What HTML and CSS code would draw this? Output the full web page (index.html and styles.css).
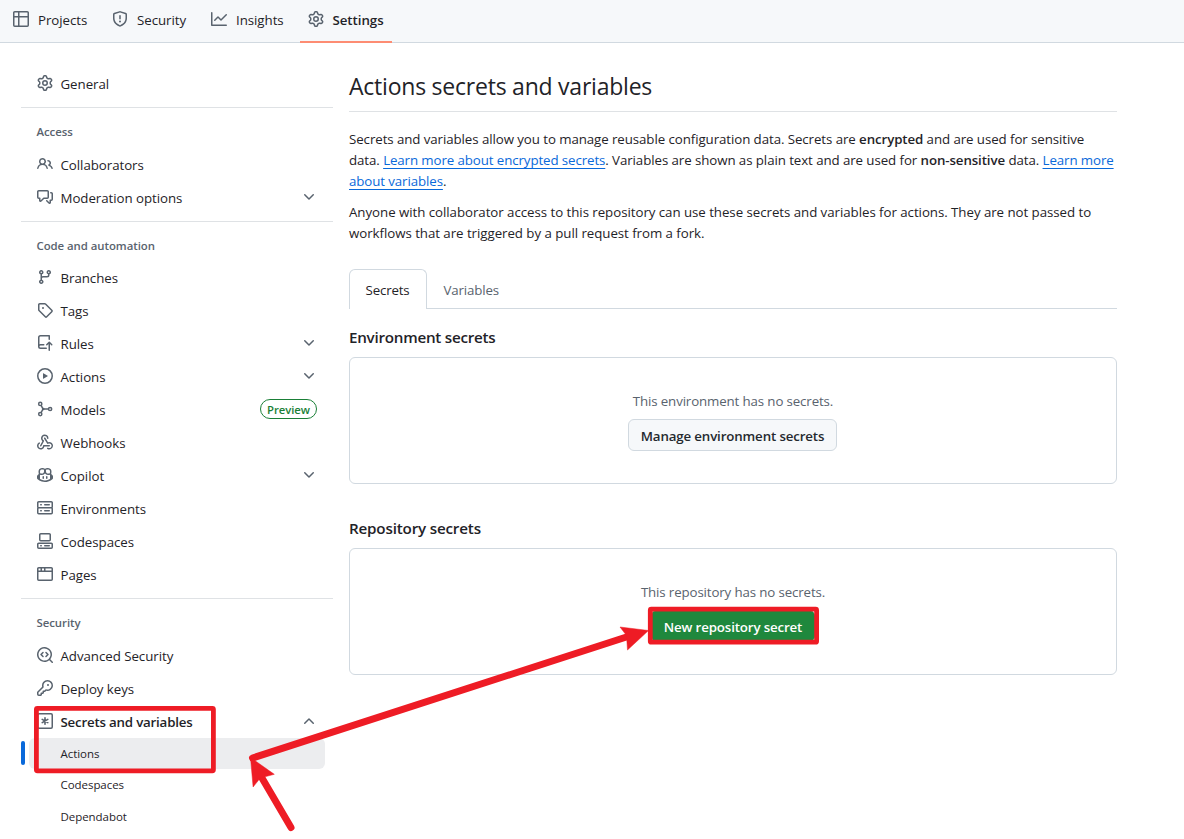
FILE: index.html
```html
<!DOCTYPE html>
<html lang="en">
<head>
<meta charset="utf-8">
<title>Actions secrets and variables</title>
<link rel="stylesheet" href="styles.css">
</head>
<body>
<svg class="defs" aria-hidden="true">
  <symbol id="table" viewBox="0 0 16 16"><path d="M0 1.75C0 .784.784 0 1.75 0h12.5C15.216 0 16 .784 16 1.75v12.5A1.75 1.75 0 0 1 14.25 16H1.75A1.75 1.75 0 0 1 0 14.25ZM6.5 6.5v8h7.75a.25.25 0 0 0 .25-.25V6.5Zm8-1.500V1.750a.25.25 0 0 0-.25-.25H6.500V5Zm-13 1.500v7.750c0 .138.112.25.25.25H5v-8ZM5 5V1.500H1.750a.25.25 0 0 0-.25.25V5Z"/></symbol>
  <symbol id="shield" viewBox="0 0 16 16"><path d="M7.467.133a1.748 1.748 0 0 1 1.066 0l5.25 1.680A1.750 1.750 0 0 1 15 3.480V7c0 1.566-.32 3.182-1.303 4.682-.983 1.498-2.585 2.813-5.032 3.855a1.697 1.697 0 0 1-1.330 0c-2.447-1.042-4.049-2.357-5.032-3.855C1.320 10.182 1 8.566 1 7V3.480a1.750 1.750 0 0 1 1.217-1.667Zm.610 1.429a.25.25 0 0 0-.153 0l-5.250 1.680a.25.25 0 0 0-.174.238V7c0 1.358.275 2.666 1.057 3.860.784 1.194 2.121 2.340 4.366 3.297a.196.196 0 0 0 .154 0c2.245-.956 3.582-2.104 4.366-3.298C13.225 9.666 13.500 8.360 13.500 7V3.480a.251.251 0 0 0-.174-.237l-5.250-1.680ZM8.750 4.750v3a.75.75 0 0 1-1.500 0v-3a.75.75 0 0 1 1.500 0ZM9 10.500a1 1 0 1 1-2 0 1 1 0 0 1 2 0Z"/></symbol>
  <symbol id="graph" viewBox="0 0 16 16"><path d="M1.500 1.750V13.500h13.750a.75.75 0 0 1 0 1.500H.750a.75.75 0 0 1-.75-.75V1.750a.75.75 0 0 1 1.500 0Zm14.280 2.530-5.250 5.250a.75.75 0 0 1-1.060 0L7 7.060 4.280 9.780a.751.751 0 0 1-1.042-.018.751.751 0 0 1-.018-1.042l3.250-3.250a.75.75 0 0 1 1.060 0L10 7.940l4.720-4.720a.751.751 0 0 1 1.042.018.751.751 0 0 1 .018 1.042Z"/></symbol>
  <symbol id="gear" viewBox="0 0 16 16"><path d="M8 0a8.200 8.200 0 0 1 .701.031C9.444.095 9.990.645 10.160 1.290l.288 1.107c.018.066.079.158.212.224.231.114.454.243.668.386.123.082.233.090.299.071l1.103-.303c.644-.176 1.392.021 1.820.63.270.385.506.792.704 1.218.315.675.111 1.422-.364 1.891l-.814.806c-.049.048-.098.147-.088.294.016.257.016.515 0 .772-.010.147.038.246.088.294l.814.806c.475.469.679 1.216.364 1.891a7.977 7.977 0 0 1-.704 1.217c-.428.610-1.176.807-1.820.630l-1.102-.302c-.067-.019-.177-.011-.300.071a5.909 5.909 0 0 1-.668.386c-.133.066-.194.158-.211.224l-.290 1.106c-.168.646-.715 1.196-1.458 1.260a8.006 8.006 0 0 1-1.402 0c-.743-.064-1.289-.614-1.458-1.260l-.289-1.106c-.018-.066-.079-.158-.212-.224a5.738 5.738 0 0 1-.668-.386c-.123-.082-.233-.090-.299-.071l-1.103.303c-.644.176-1.392-.021-1.820-.630a8.120 8.120 0 0 1-.704-1.218c-.315-.675-.111-1.422.363-1.891l.815-.806c.050-.048.098-.147.088-.294a6.214 6.214 0 0 1 0-.772c.010-.147-.038-.246-.088-.294l-.815-.806C.635 6.045.431 5.298.746 4.623a7.920 7.920 0 0 1 .704-1.217c.428-.610 1.176-.807 1.820-.630l1.102.302c.067.019.177.011.300-.071.214-.143.437-.272.668-.386.133-.066.194-.158.211-.224l.290-1.106C6.009.645 6.556.095 7.299.030 7.530.010 7.764 0 8 0Zm-.571 1.525c-.036.003-.108.036-.137.146l-.289 1.105c-.147.561-.549.967-.998 1.189-.173.086-.340.183-.500.290-.417.278-.970.423-1.529.270l-1.103-.303c-.109-.030-.175.016-.195.045-.220.312-.412.644-.573.990-.014.031-.021.110.059.190l.815.806c.411.406.562.957.530 1.456a4.709 4.709 0 0 0 0 .582c.032.499-.119 1.050-.530 1.456l-.815.806c-.081.080-.073.159-.059.190.162.346.353.677.573.989.020.030.085.076.195.046l1.102-.303c.560-.153 1.113-.008 1.530.270.161.107.328.204.501.290.447.222.850.629.997 1.189l.289 1.105c.029.109.101.143.137.146a6.600 6.600 0 0 0 1.142 0c.036-.003.108-.036.137-.146l.289-1.105c.147-.561.549-.967.998-1.189.173-.086.340-.183.500-.290.417-.278.970-.423 1.529-.270l1.103.303c.109.029.175-.016.195-.045.220-.313.411-.644.573-.990.014-.031.021-.110-.059-.190l-.815-.806c-.411-.406-.562-.957-.530-1.456a4.709 4.709 0 0 0 0-.582c-.032-.499.119-1.050.530-1.456l.815-.806c.081-.080.073-.159.059-.190a6.464 6.464 0 0 0-.573-.989c-.020-.030-.085-.076-.195-.046l-1.102.303c-.560.153-1.113.008-1.530-.270a4.440 4.440 0 0 0-.501-.290c-.447-.222-.850-.629-.997-1.189l-.289-1.105c-.029-.110-.101-.143-.137-.146a6.600 6.600 0 0 0-1.142 0ZM11 8a3 3 0 1 1-6 0 3 3 0 0 1 6 0ZM9.500 8a1.500 1.500 0 1 0-3.001.001A1.500 1.500 0 0 0 9.500 8Z"/></symbol>
  <symbol id="people" viewBox="0 0 16 16"><path d="M2 5.500a3.500 3.500 0 1 1 5.898 2.549 5.508 5.508 0 0 1 3.034 4.084.75.75 0 1 1-1.482.235 4 4 0 0 0-7.900 0 .75.75 0 0 1-1.482-.236A5.507 5.507 0 0 1 3.102 8.050 3.493 3.493 0 0 1 2 5.500ZM11 4a3.001 3.001 0 0 1 2.220 5.018 5.010 5.010 0 0 1 2.560 3.012.749.749 0 0 1-.885.954.752.752 0 0 1-.549-.514 3.507 3.507 0 0 0-2.522-2.372.75.75 0 0 1-.574-.730v-.352a.75.75 0 0 1 .416-.672A1.500 1.500 0 0 0 11 5.500.75.75 0 0 1 11 4Zm-5.500-.500a2 2 0 1 0-.001 3.999A2 2 0 0 0 5.500 3.500Z"/></symbol>
  <symbol id="comments" viewBox="0 0 16 16"><path d="M1.750 1h8.500c.966 0 1.750.784 1.750 1.750v5.500A1.750 1.750 0 0 1 10.250 10H7.061l-2.574 2.573A1.458 1.458 0 0 1 2 11.543V10h-.250A1.750 1.750 0 0 1 0 8.250v-5.500C0 1.784.784 1 1.750 1ZM1.500 2.750v5.500c0 .138.112.250.250.250h1a.75.75 0 0 1 .750.750v2.190l2.720-2.720a.749.749 0 0 1 .530-.220h3.500a.25.25 0 0 0 .250-.250v-5.500a.25.25 0 0 0-.250-.250h-8.500a.25.25 0 0 0-.250.250Zm13 2a.25.25 0 0 0-.250-.250h-.500a.75.75 0 0 1 0-1.500h.500c.966 0 1.750.784 1.750 1.750v5.500A1.750 1.750 0 0 1 14.250 12H14v1.543a1.458 1.458 0 0 1-2.487 1.030L9.220 12.280a.749.749 0 0 1 .326-1.275.749.749 0 0 1 .734.215l2.220 2.220v-2.190a.75.75 0 0 1 .750-.750h1a.25.25 0 0 0 .250-.250Z"/></symbol>
  <symbol id="branch" viewBox="0 0 16 16"><path d="M9.500 3.250a2.250 2.250 0 1 1 3 2.122V6A2.500 2.500 0 0 1 10 8.500H6a1 1 0 0 0-1 1v1.128a2.251 2.251 0 1 1-1.500 0V5.372a2.250 2.250 0 1 1 1.500 0v1.836A2.493 2.493 0 0 1 6 7h4a1 1 0 0 0 1-1v-.628A2.250 2.250 0 0 1 9.500 3.250Zm-6 0a.75.75 0 1 0 1.500 0 .75.75 0 0 0-1.500 0Zm8.250-.750a.75.75 0 1 0 0 1.500.75.75 0 0 0 0-1.500ZM4.250 12a.75.75 0 1 0 0 1.500.75.75 0 0 0 0-1.500Z"/></symbol>
  <symbol id="tag" viewBox="0 0 16 16"><path d="M1 7.775V2.750C1 1.784 1.784 1 2.750 1h5.025c.464 0 .910.184 1.238.513l6.250 6.250a1.750 1.750 0 0 1 0 2.474l-5.026 5.026a1.750 1.750 0 0 1-2.474 0l-6.250-6.250A1.752 1.752 0 0 1 1 7.775Zm1.500 0c0 .066.026.130.073.177l6.250 6.250a.25.25 0 0 0 .354 0l5.025-5.025a.25.25 0 0 0 0-.354l-6.250-6.250a.25.25 0 0 0-.177-.073H2.750a.25.25 0 0 0-.250.250ZM6 5a1 1 0 1 1 0 2 1 1 0 0 1 0-2Z"/></symbol>
  <symbol id="rules" viewBox="0 0 16 16"><path d="M1 2.500A2.500 2.500 0 0 1 3.500 0h8.750a.75.75 0 0 1 .750.750v3.500a.75.75 0 0 1-1.500 0V1.500h-8a1 1 0 0 0-1 1v6.708A2.493 2.493 0 0 1 3.500 9h3.250a.75.75 0 0 1 0 1.500H3.500a1 1 0 0 0 0 2h5.750a.75.75 0 0 1 0 1.500H3.500A2.500 2.500 0 0 1 1 11.500Zm13.230 7.790-1.230-1.224v6.184a.75.75 0 0 1-1.500 0V9.066L10.280 10.280a.75.75 0 0 1-1.060-1.060l2.505-2.504a.75.75 0 0 1 1.060 0L15.290 9.220a.751.751 0 0 1-.018 1.042.751.751 0 0 1-1.042.018Z"/></symbol>
  <symbol id="play" viewBox="0 0 16 16"><path d="M8 0a8 8 0 1 1 0 16A8 8 0 0 1 8 0ZM1.500 8a6.500 6.500 0 1 0 13 0 6.500 6.500 0 0 0-13 0Zm4.879-2.773 4.264 2.559a.25.25 0 0 1 0 .428l-4.264 2.559A.25.25 0 0 1 6 10.559V5.442a.25.25 0 0 1 .379-.215Z"/></symbol>
  <symbol id="models" viewBox="0 0 16 16"><g fill="none" stroke="currentColor" stroke-width="1.500"><circle cx="3.250" cy="2.900" r="1.600"/><circle cx="3.250" cy="13.100" r="1.600"/><circle cx="13.100" cy="8" r="1.600"/><path d="M4.100 4.300 6 8 4.100 11.700M6 8h5.500"/></g><circle cx="6.200" cy="8" r="1.300"/></symbol>
  <symbol id="webhook" viewBox="0 0 16 16"><path d="M5.500 4.250a2.250 2.250 0 0 1 4.500 0 .75.75 0 0 0 1.500 0 3.750 3.750 0 1 0-6.140 2.889l-2.272 4.258a.75.75 0 0 0 1.324.706L7 7.250a.75.75 0 0 0-.309-1.015A2.250 2.250 0 0 1 5.500 4.250Z"/><path d="M7.364 3.607a.75.75 0 0 1 1.030.257l2.608 4.349a3.750 3.750 0 1 1-.628 6.785.75.75 0 0 1 .752-1.299 2.250 2.250 0 1 0-.033-3.880.75.75 0 0 1-1.030-.256L7.107 4.636a.75.75 0 0 1 .257-1.030Z"/><path d="M2.900 8.776A.75.75 0 0 1 2.625 9.800 2.250 2.250 0 1 0 6 11.750a.75.75 0 0 1 .750-.751h5.500a.75.75 0 0 1 0 1.500H7.425a3.751 3.751 0 1 1-5.550-3.998.75.75 0 0 1 1.024.274Z"/></symbol>
  <symbol id="copilot" viewBox="0 0 16 16"><path d="M7.998 15.035c-4.562 0-7.873-2.914-7.998-3.749V9.338c.085-.628.677-1.686 1.588-2.065.013-.070.024-.143.036-.218.029-.183.060-.384.126-.612-.201-.508-.254-1.084-.254-1.656 0-.870.128-1.769.693-2.484.579-.733 1.494-1.124 2.724-1.261 1.206-.134 2.262.034 2.944.765.050.053.096.108.139.165.044-.057.094-.112.143-.165.682-.731 1.738-.899 2.944-.765 1.230.137 2.145.528 2.724 1.261.566.715.693 1.614.693 2.484 0 .572-.053 1.148-.254 1.656.066.228.098.429.126.612.012.076.024.148.037.218.924.385 1.522 1.471 1.591 2.095v1.872c0 .766-3.351 3.795-8.002 3.795Zm0-1.485c2.280 0 4.584-1.110 5.002-1.433V7.862l-.023-.116c-.490.210-1.075.291-1.727.291-1.146 0-2.059-.327-2.710-.991A3.222 3.222 0 0 1 8 6.303a3.240 3.240 0 0 1-.544.743c-.650.664-1.563.991-2.710.991-.652 0-1.236-.081-1.727-.291l-.023.116v4.255c.419.323 2.722 1.433 5.002 1.433ZM6.762 2.830c-.193-.206-.637-.413-1.682-.297-1.019.113-1.479.404-1.713.700-.247.312-.369.789-.369 1.554 0 .793.129 1.171.308 1.371.162.181.519.379 1.442.379.853 0 1.339-.235 1.638-.540.315-.322.527-.827.617-1.553.117-.935-.037-1.395-.241-1.614Zm4.155-.297c-1.044-.116-1.488.091-1.681.297-.204.219-.359.679-.242 1.614.091.726.303 1.231.618 1.553.299.305.784.540 1.638.540.922 0 1.280-.198 1.442-.379.179-.200.308-.578.308-1.371 0-.765-.123-1.242-.370-1.554-.233-.296-.693-.587-1.713-.700Z"/><path d="M6.250 9.037a.75.75 0 0 1 .750.750v1.501a.75.75 0 0 1-1.500 0V9.787a.75.75 0 0 1 .750-.750Zm4.250.750v1.501a.75.75 0 0 1-1.500 0V9.787a.75.75 0 0 1 1.500 0Z"/></symbol>
  <symbol id="server" viewBox="0 0 16 16"><path d="M1.750 1h12.500c.966 0 1.750.784 1.750 1.750v4c0 .372-.116.717-.314 1 .198.283.314.628.314 1v4a1.750 1.750 0 0 1-1.750 1.750H1.750A1.750 1.750 0 0 1 0 12.750v-4c0-.358.109-.707.314-1a1.739 1.739 0 0 1-.314-1v-4C0 1.784.784 1 1.750 1ZM1.500 2.750v4c0 .138.112.250.250.250h12.500a.25.25 0 0 0 .250-.250v-4a.25.25 0 0 0-.250-.250H1.750a.25.25 0 0 0-.250.250Zm.250 5.750a.25.25 0 0 0-.250.250v4c0 .138.112.250.250.250h12.500a.25.25 0 0 0 .250-.250v-4a.25.25 0 0 0-.250-.250ZM7 4.750A.75.75 0 0 1 7.750 4h4.500a.75.75 0 0 1 0 1.500h-4.500A.75.75 0 0 1 7 4.750ZM7.750 10h4.500a.75.75 0 0 1 0 1.500h-4.500a.75.75 0 0 1 0-1.500ZM3 4.750A.75.75 0 0 1 3.750 4h.500a.75.75 0 0 1 0 1.500h-.500A.75.75 0 0 1 3 4.750ZM3.750 10h.500a.75.75 0 0 1 0 1.500h-.500a.75.75 0 0 1 0-1.500Z"/></symbol>
  <symbol id="codespaces" viewBox="0 0 16 16"><path d="M0 11.250c0-.966.784-1.750 1.750-1.750h12.500c.966 0 1.750.784 1.750 1.750v3A1.750 1.750 0 0 1 14.250 16H1.750A1.750 1.750 0 0 1 0 14.250Zm2-9.500C2 .784 2.784 0 3.750 0h8.500C13.216 0 14 .784 14 1.750v5a1.750 1.750 0 0 1-1.750 1.750h-8.500A1.750 1.750 0 0 1 2 6.750Zm1.750-.250a.25.25 0 0 0-.250.250v5c0 .138.112.250.250.250h8.500a.25.25 0 0 0 .250-.250v-5a.25.25 0 0 0-.250-.250Zm-2 9.500a.25.25 0 0 0-.250.250v3c0 .138.112.250.250.250h12.500a.25.25 0 0 0 .250-.250v-3a.25.25 0 0 0-.250-.250ZM7 12.750a.75.75 0 0 1 .750-.750h4.500a.75.75 0 0 1 0 1.500h-4.500a.75.75 0 0 1-.750-.750Zm-4 0a.75.75 0 0 1 .750-.750h.500a.75.75 0 0 1 0 1.500h-.500a.75.75 0 0 1-.750-.750Z"/></symbol>
  <symbol id="browser" viewBox="0 0 16 16"><path d="M0 2.750C0 1.784.784 1 1.750 1h12.500c.966 0 1.750.784 1.750 1.750v10.500A1.750 1.750 0 0 1 14.250 15H1.750A1.750 1.750 0 0 1 0 13.250ZM14.500 6h-13v7.250c0 .138.112.250.250.250h12.500a.25.25 0 0 0 .250-.250Zm-6-3.500v2h6V2.750a.25.25 0 0 0-.250-.250ZM5 2.500v2h2v-2Zm-3.250 0a.25.25 0 0 0-.250.250V4.500h2v-2Z"/></symbol>
  <symbol id="codescan" viewBox="0 0 16 16"><path d="M8.470 4.970a.75.75 0 0 0 0 1.060L9.940 7.500 8.470 8.970a.75.75 0 1 0 1.060 1.060l2-2a.75.75 0 0 0 0-1.060l-2-2a.75.75 0 0 0-1.060 0ZM6.530 6.030a.75.75 0 0 0-1.060-1.060l-2 2a.75.75 0 0 0 0 1.060l2 2a.75.75 0 1 0 1.060-1.060L5.060 7.500Z"/><path d="M12.246 13.307a7.500 7.500 0 1 1 1.060-1.060l2.474 2.473a.75.75 0 1 1-1.060 1.060ZM1.500 7.500a6.002 6.002 0 0 0 3.608 5.504 6.002 6.002 0 0 0 6.486-1.117.748.748 0 0 1 .292-.293A6 6 0 1 0 1.500 7.500Z"/></symbol>
  <symbol id="key" viewBox="0 0 16 16"><path d="M10.500 0a5.499 5.499 0 1 1-1.288 10.848l-.932.932a.749.749 0 0 1-.530.220H7v.750a.749.749 0 0 1-.220.530l-.500.500a.749.749 0 0 1-.530.220H5v.750a.749.749 0 0 1-.220.530l-.500.500a.749.749 0 0 1-.530.220h-2A1.750 1.750 0 0 1 0 14.250v-2c0-.199.079-.389.220-.530l4.932-4.932A5.500 5.500 0 0 1 10.500 0Zm-4 5.500c-.001.431.069.860.205 1.269a.75.75 0 0 1-.181.768L1.500 12.560v1.690c0 .138.112.250.250.250h1.690l.060-.060v-1.190a.75.75 0 0 1 .750-.750h1.190l.060-.060v-1.190a.75.75 0 0 1 .750-.750h1.190l1.023-1.025a.75.75 0 0 1 .768-.180A4 4 0 1 0 6.500 5.500ZM11 6a1 1 0 1 1 0-2 1 1 0 0 1 0 2Z"/></symbol>
  <symbol id="asterisk" viewBox="0 0 16 16"><rect x=".75" y=".75" width="14.500" height="14.500" rx="1.200" fill="none" stroke="currentColor" stroke-width="1.500"/><path d="M8 4.800v6.400M5.200 6.400l5.600 3.200M10.800 6.400l-5.600 3.200" fill="none" stroke="currentColor" stroke-width="1.600" stroke-linecap="round"/></symbol>
  <symbol id="chevron" viewBox="0 0 16 16"><path d="M12.780 5.220a.749.749 0 0 1 0 1.060l-4.250 4.250a.749.749 0 0 1-1.060 0L3.220 6.280a.749.749 0 1 1 1.060-1.060L8 8.939l3.720-3.719a.749.749 0 0 1 1.060 0Z"/></symbol>
</svg>

<nav class="topbar">
  <a class="tab"><svg class="icon"><use href="#table"/></svg><span class="t-projects">Projects</span></a>
  <a class="tab"><svg class="icon"><use href="#shield"/></svg><span class="t-security">Security</span></a>
  <a class="tab"><svg class="icon"><use href="#graph"/></svg><span class="t-insights">Insights</span></a>
  <a class="tab tab-current"><svg class="icon"><use href="#gear"/></svg><span class="t-settings">Settings</span></a>
</nav>

<div class="layout">
  <aside class="sidebar">
    <a class="item"><svg class="icon"><use href="#gear"/></svg>General</a>
    <hr class="rule">
    <h3 class="group">Access</h3>
    <a class="item"><svg class="icon"><use href="#people"/></svg>Collaborators</a>
    <a class="item"><svg class="icon"><use href="#comments"/></svg>Moderation options<svg class="icon chevron"><use href="#chevron"/></svg></a>
    <hr class="rule">
    <h3 class="group group-tight">Code and automation</h3>
    <a class="item"><svg class="icon"><use href="#branch"/></svg>Branches</a>
    <a class="item"><svg class="icon"><use href="#tag"/></svg>Tags</a>
    <a class="item"><svg class="icon"><use href="#rules"/></svg>Rules<svg class="icon chevron"><use href="#chevron"/></svg></a>
    <a class="item"><svg class="icon"><use href="#play"/></svg>Actions<svg class="icon chevron"><use href="#chevron"/></svg></a>
    <a class="item"><svg class="icon"><use href="#models"/></svg>Models<span class="badge">Preview</span></a>
    <a class="item"><svg class="icon"><use href="#webhook"/></svg>Webhooks</a>
    <a class="item"><svg class="icon"><use href="#copilot"/></svg>Copilot<svg class="icon chevron"><use href="#chevron"/></svg></a>
    <a class="item"><svg class="icon"><use href="#server"/></svg>Environments</a>
    <a class="item"><svg class="icon"><use href="#codespaces"/></svg>Codespaces</a>
    <a class="item"><svg class="icon"><use href="#browser"/></svg>Pages</a>
    <hr class="rule">
    <h3 class="group">Security</h3>
    <a class="item"><svg class="icon"><use href="#codescan"/></svg>Advanced Security</a>
    <a class="item"><svg class="icon"><use href="#key"/></svg>Deploy keys</a>
    <a class="item item-open"><svg class="icon"><use href="#asterisk"/></svg>Secrets and variables<svg class="icon chevron chevron-up"><use href="#chevron"/></svg></a>
    <a class="subitem subitem-current">Actions</a>
    <a class="subitem">Codespaces</a>
    <a class="subitem">Dependabot</a>
  </aside>

  <main class="content">
    <h1 class="title">Actions secrets and variables</h1>
    <p class="para">Secrets and variables allow you to manage reusable configuration data. Secrets are <b>encrypted</b> and are used for sensitive<br>data. <a class="link">Learn more about encrypted secrets</a>. Variables are shown as plain text and are used for <b>non-sensitive</b> data. <a class="link">Learn more<br>about variables</a>.</p>
    <p class="para">Anyone with collaborator access to this repository can use these secrets and variables for actions. They are not passed to<br>workflows that are triggered by a pull request from a fork.</p>
    <div class="tabs">
      <a class="subtab subtab-current">Secrets</a>
      <a class="subtab">Variables</a>
    </div>
    <h2 class="heading">Environment secrets</h2>
    <section class="box">
      <p class="empty">This environment has no secrets.</p>
      <button class="btn">Manage environment secrets</button>
    </section>
    <h2 class="heading heading-second">Repository secrets</h2>
    <section class="box">
      <p class="empty">This repository has no secrets.</p>
      <button class="btn btn-primary">New repository secret</button>
    </section>
  </main>
</div>

<svg class="annotations" viewBox="0 0 1184 839" aria-hidden="true">
  <rect x="36.400" y="708.300" width="177" height="62.500" rx="1"/>
  <rect x="650.300" y="609.200" width="166.300" height="33" rx="1"/>
  <path class="shaft" d="M252.500 758 628 636.500"/>
  <path class="shaft" d="M291 827.500 262 778"/>
  <path class="head" d="M648.500 630.500 620 627l6.500 8.500 1 14.500Z"/>
  <path class="head" d="M250.500 757.500 274.300 774.300l-14 3.700-7.200 9Z"/>
</svg>
</body>
</html>
```
FILE: styles.css
```css
* { box-sizing: border-box; }

body {
  margin: 0;
  height: 839px;
  overflow: hidden;
  position: relative;
  background: #fff;
  color: #1f2328;
  font: 13.3px/21px "Open Sans", "Noto Sans", sans-serif;
  letter-spacing: -.05px;
}

.defs { display: none; }

.icon {
  width: 16px;
  height: 16px;
  flex: none;
  fill: currentColor;
  color: #59636e;
}

.topbar {
  display: flex;
  gap: 8px;
  height: 43px;
  padding-left: 5px;
  background: #f6f8fa;
  border-bottom: 1px solid #d1d9e0;
}

.tab {
  display: flex;
  gap: 9px;
  height: 43px;
  padding: 11px 8px 0;
  line-height: 18px;
}
.t-projects { width: 50px; }
.t-security { width: 50px; }
.t-insights { width: 48px; }
.t-settings { width: 51px; }
.tab-current { gap: 8.5px; font-weight: 600; border-bottom: 2px solid #fd8c73; }

.layout { display: flex; gap: 16px; padding-left: 21px; }

.sidebar { width: 312px; padding-top: 24px; }

.item {
  display: flex;
  align-items: center;
  gap: 7.5px;
  height: 33px;
  padding: 1px 8px 0 16px;
}
.item .icon { margin-bottom: 2px; }
.item-open { font-weight: 600; letter-spacing: -.2px; }
.item .chevron { margin-left: auto; margin-right: 8px; }
.item .chevron-up { transform: rotate(180deg); }

.badge {
  margin: 0 8px 2px auto;
  width: 57px;
  height: 20px;
  border: 1px solid #1a7f37;
  border-radius: 10px;
  color: #1a7f37;
  font-size: 11.3px;
  font-weight: 600;
  line-height: 19px;
  text-align: center;
}

.rule { height: 1px; margin: 7px 0 0; border: 0; background: #dfe2e5; }

.group {
  margin: 0;
  padding: 8px 0 0 15.5px;
  height: 40px;
  color: #59636e;
  font-size: 11.4px;
  font-weight: 600;
  line-height: 32px;
}
.group-tight { height: 39px; }

.subitem {
  display: block;
  height: 31.5px;
  margin: 0 8px;
  padding-left: 31.5px;
  font-size: 11.5px;
  line-height: 31px;
}
.subitem-current {
  position: relative;
  height: 31px;
  border-radius: 6px;
  background: #ecedef;
}
.subitem-current::before {
  content: "";
  position: absolute;
  left: -8px;
  top: 3px;
  width: 4px;
  height: 24px;
  border-radius: 3px;
  background: #0969da;
}

.content { width: 768px; padding-top: 24px; }

.title {
  height: 45px;
  margin: 0 0 17px;
  border-bottom: 1px solid #dfe2e5;
  font-size: 23px;
  font-weight: 400;
  letter-spacing: -.23px;
  line-height: 39px;
}

.para { margin: 0 0 10px; white-space: nowrap; }
.para b { font-weight: 600; letter-spacing: -.1px; }
.link {
  color: #0969da;
  letter-spacing: -.1px;
  text-decoration: underline;
  text-underline-offset: 3px;
  text-decoration-skip-ink: none;
}
.para:first-of-type { letter-spacing: -.08px; }

.tabs {
  display: flex;
  height: 40px;
  margin-top: 25px;
  border-bottom: 1px solid #d1d9e0;
}
.subtab { height: 40px; padding: 1px 16.5px; color: #59636e; letter-spacing: -.15px; line-height: 41px; }
.subtab-current {
  width: 78px;
  padding: 0 15.5px;
  border: 1px solid #d1d9e0;
  border-bottom: 0;
  border-radius: 6px 6px 0 0;
  background: #fff;
  color: #1f2328;
}

.heading { margin: 17px 0 8px; font-size: 15.2px; font-weight: 600; letter-spacing: -.25px; line-height: 23px; }
.heading-second { margin-top: 33px; letter-spacing: -.18px; }

.box {
  display: flex;
  flex-direction: column;
  align-items: center;
  height: 127px;
  padding-top: 33px;
  border: 1px solid #d1d9e0;
  border-radius: 6px;
}
.empty { margin: 0 0 7px; color: #59636e; letter-spacing: -.13px; }

.btn {
  width: 209px;
  height: 32px;
  margin-right: 1px;
  padding: 2px 0 0;
  border: 1px solid #d1d9e0;
  border-radius: 6px;
  background: #f6f8fa;
  color: #25292e;
  font: 600 13.3px/28px "Open Sans", sans-serif;
  letter-spacing: -.14px;
  white-space: nowrap;
}
.btn-primary { width: 164px; margin-right: 0; border-color: #1f883d; background: #1f883d; color: #fff; }

.annotations {
  position: absolute;
  left: 0;
  top: 0;
  width: 1184px;
  height: 839px;
  pointer-events: none;
}
.annotations rect { fill: none; stroke: #ee1c25; stroke-width: 4.8; }
.annotations .shaft { fill: none; stroke: #ee1c25; stroke-width: 7; stroke-linecap: round; }
.annotations .head { fill: #ee1c25; stroke: #ee1c25; stroke-width: .5; }
```
